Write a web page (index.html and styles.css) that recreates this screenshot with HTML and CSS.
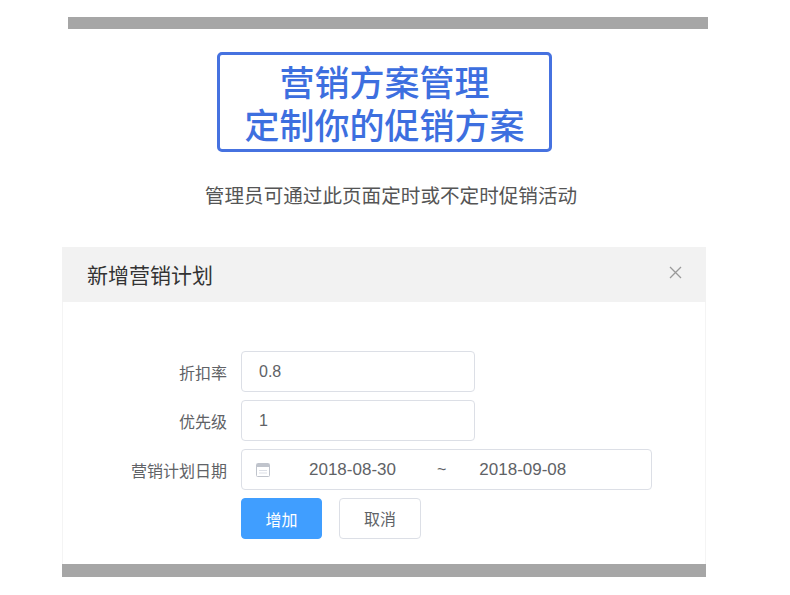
FILE: index.html
```html
<!DOCTYPE html>
<html lang="zh-CN">
<head>
<meta charset="utf-8">
<title>营销方案管理</title>
<link rel="stylesheet" href="styles.css">
</head>
<body>
<div class="page">
  <div class="top-bar"></div>
  <div class="title-box">
    <div class="title-line">营销方案管理</div>
    <div class="title-line">定制你的促销方案</div>
  </div>
  <p class="subtitle">管理员可通过此页面定时或不定时促销活动</p>

  <div class="dialog">
    <div class="dialog-header">
      <span class="dialog-title">新增营销计划</span>
      <svg class="close" width="13" height="13" viewBox="0 0 13 13"><path d="M1 1L12 12M12 1L1 12" stroke="#9a9a9a" stroke-width="1.3" fill="none"/></svg>
    </div>
    <div class="dialog-body">
      <div class="form-row">
        <label class="form-label">折扣率</label>
        <div class="input">0.8</div>
      </div>
      <div class="form-row">
        <label class="form-label">优先级</label>
        <div class="input">1</div>
      </div>
      <div class="form-row">
        <label class="form-label">营销计划日期</label>
        <div class="input date-range">
          <svg class="cal" width="14" height="14" viewBox="0 0 14 14"><rect x="0.5" y="0.5" width="13" height="13" rx="1" fill="none" stroke="#c0c4cc"/><rect x="1" y="1" width="12" height="3" fill="#c0c4cc"/><path d="M3 7.5H11M3 10H11" stroke="#dcdfe6" stroke-width="1"/></svg>
          <span class="date start">2018-08-30</span>
          <span class="sep">~</span>
          <span class="date end">2018-09-08</span>
        </div>
      </div>
      <div class="form-row actions">
        <span class="form-label"></span>
        <button class="btn btn-primary">增加</button>
        <button class="btn btn-default">取消</button>
      </div>
    </div>
    <div class="bottom-bar"></div>
  </div>
</div>
</body>
</html>
```

FILE: styles.css
```css
html, body {
  margin: 0;
  padding: 0;
  background: #ffffff;
}
body {
  font-family: "Noto Sans CJK SC", "Liberation Sans", sans-serif;
  width: 790px;
  height: 595px;
  overflow: hidden;
}
.page {
  display: flex;
  flex-direction: column;
}
.top-bar {
  margin: 17px 0 0 68px;
  width: 640px;
  height: 12px;
  background: #a6a6a6;
}
.title-box {
  margin: 23px 0 0 217px;
  width: 335px;
  height: 100px;
  box-sizing: border-box;
  border: 3px solid #4672e0;
  border-radius: 5px;
  display: flex;
  flex-direction: column;
  justify-content: center;
  align-items: center;
  padding-top: 0;
}
.title-line {
  color: #3d6fdf;
  font-size: 35px;
  font-weight: 500;
  line-height: 43px;
  white-space: nowrap;
}
.title-line:first-child {
  margin-top: -1px;
}
.subtitle {
  margin: 29px 0 0 0;
  padding-right: 8px;
  text-align: center;
  font-size: 19.6px;
  line-height: 28px;
  color: #555555;
}
.dialog {
  margin: 38px 0 0 62px;
  width: 644px;
  display: flex;
  flex-direction: column;
}
.dialog-header {
  height: 55px;
  background: #f2f2f2;
  display: flex;
  align-items: center;
  justify-content: space-between;
  padding: 0 24px 0 25px;
}
.dialog-title {
  font-size: 21px;
  color: #333333;
  margin-top: -1px;
}
.close {
  margin-top: -4px;
}
.dialog-body {
  padding: 49px 0 25px 0;
  display: flex;
  flex-direction: column;
  gap: 8px;
  border-left: 1px solid #f4f4f4;
  border-right: 1px solid #f4f4f4;
}
.form-row {
  display: flex;
  align-items: center;
}
.form-label {
  width: 164px;
  box-sizing: border-box;
  text-align: right;
  margin-right: 14px;
  font-size: 16px;
  color: #606266;
}
.input {
  width: 234px;
  height: 41px;
  box-sizing: border-box;
  border: 1px solid #dcdfe6;
  border-radius: 4px;
  display: flex;
  align-items: center;
  padding-left: 17px;
  font-family: "Liberation Sans", sans-serif;
  font-size: 16px;
  color: #606266;
}
.date-range {
  width: 411px;
  padding-left: 14px;
}
.cal {
  margin-right: 39px;
}
.date {
  font-size: 17px;
  color: #606266;
}
.sep {
  margin: 0 33px 0 41px;
  font-size: 16px;
  color: #606266;
}
.actions {
  margin-top: -1px;
}
.btn {
  height: 41px;
  box-sizing: border-box;
  border-radius: 4px;
  font-family: "Noto Sans CJK SC", sans-serif;
  font-size: 16px;
  padding: 0;
}
.btn-primary {
  width: 81px;
  background: #409eff;
  border: 1px solid #409eff;
  color: #ffffff;
  margin-top: 1px;
}
.btn-default {
  width: 82px;
  margin-left: 17px;
  background: #ffffff;
  border: 1px solid #dcdfe6;
  color: #606266;
}
.bottom-bar {
  height: 13px;
  background: #a6a6a6;
}
```
